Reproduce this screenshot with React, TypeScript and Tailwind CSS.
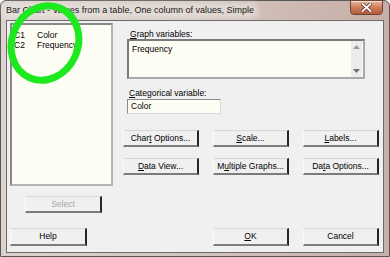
import React from "react";

type BtnProps = {
  children: React.ReactNode;
  className?: string;
  disabled?: boolean;
};

function WinButton({ children, className = "", disabled }: BtnProps) {
  return (
    <div
      className={`flex items-center justify-center bg-[#f0f0f0] border-t border-t-[#d6d6d6] border-l border-l-[#fbfbfb] border-r-2 border-r-[#262626] border-b-2 border-b-[#7c7c7c] text-[8.5px] leading-none ${
        disabled ? "text-[#a6a6a6]" : "text-black"
      } ${className}`}
    >
      <span>{children}</span>
    </div>
  );
}

function CloseButton() {
  return (
    <div className="-mt-[1px] mr-[1px] flex h-[15px] w-[33px] items-center justify-center rounded-b-[4px] border border-[#6a4436] bg-gradient-to-b from-[#e6bba4] via-[#cf7d57] to-[#b45a3b] shadow-[inset_0_1px_0_rgba(255,235,220,0.7)]">
      <svg width="11" height="9" viewBox="0 0 11 9">
        <path
          d="M1.5 1 L9.5 8 M9.5 1 L1.5 8"
          stroke="#5b3326"
          strokeWidth="3.4"
          strokeLinecap="square"
        />
        <path
          d="M1.5 1 L9.5 8 M9.5 1 L1.5 8"
          stroke="#ffffff"
          strokeWidth="1.8"
          strokeLinecap="square"
        />
      </svg>
    </div>
  );
}

function App() {
  return (
    <div className="relative h-[257px] w-[390px] overflow-hidden bg-white font-['Liberation_Sans',Arial,sans-serif]">
      <div className="flex h-full flex-col rounded-t-[6px] border border-[#585656] bg-gradient-to-r from-[#dbd3ce] via-[#d3c5bf] to-[#c7aea6] px-[5px] pb-[3px]">
        {/* title bar */}
        <div className="flex h-[19px] items-center justify-between">
          <span className="-ml-[2px] rounded-full bg-[rgba(236,231,228,0.55)] px-[2px] text-[9px] leading-[11px] text-[#1a1a1a] shadow-[0_0_5px_3px_rgba(236,231,228,0.55)]">
            Bar Chart - Values from a table, One column of values, Simple
          </span>
          <div className="self-start">
            <CloseButton />
          </div>
        </div>

        {/* client area */}
        <div className="flex flex-1 flex-col border border-[#6c6a6a] bg-[#f0f0f0] pl-[3px] pt-[2px] pr-[4px]">
          <div className="flex">
            {/* left column */}
            <div className="flex w-[103px] flex-col">
              <div className="h-[163px] border-2 border-t-[#8a8a8a] border-l-[#8a8a8a] border-r-[#b4b4b4] border-b-[#b4b4b4] bg-[#fdfdf3] pl-[2px] pt-[5px] text-[8.5px] leading-[10px] text-black">
                <div className="flex">
                  <span className="w-[23px]">C1</span>
                  <span>Color</span>
                </div>
                <div className="flex">
                  <span className="w-[23px]">C2</span>
                  <span>Frequency</span>
                </div>
              </div>
              <WinButton disabled className="ml-[15px] mt-[10px] h-[17px] w-[77px]">
                Select
              </WinButton>
            </div>

            {/* right column */}
            <div className="ml-[10px] flex flex-col">
              <div className="ml-[7px] mt-[6px] h-[10px] text-[8.5px] leading-[10px] text-black">
                <u>G</u>raph variables:
              </div>
              <div className="ml-[4px] flex h-[40px] w-[238px] border-2 border-t-[#7a7a7a] border-l-[#7a7a7a] border-r-[#a9a9a9] border-b-[#a9a9a9] bg-[#fdfdf3]">
                <div className="flex-1 pl-[3px] pt-[3px] text-[8.5px] leading-[10px] text-black">
                  Frequency
                </div>
                <div className="mr-[1px] flex w-[11px] flex-col items-center justify-between bg-[#ececea] py-[4px]">
                  <svg width="7" height="4" viewBox="0 0 7 4">
                    <path d="M0 4 L3.5 0 L7 4 Z" fill="#9a9a9a" />
                  </svg>
                  <svg width="7" height="4" viewBox="0 0 7 4">
                    <path d="M0 0 L7 0 L3.5 4 Z" fill="#6e6e6e" />
                  </svg>
                </div>
              </div>
              <div className="ml-[6px] mt-[9px] h-[10px] text-[8.5px] leading-[10px] text-black">
                <u>C</u>ategorical variable:
              </div>
              <div className="ml-[4px] mt-[1px] flex h-[15px] w-[94px] items-center border border-t-[#8c8c8c] border-l-[#8c8c8c] border-r-[#dadada] border-b-[#dadada] bg-[#fdfdf3] pl-[3px] text-[8.5px] leading-none text-black">
                Color
              </div>
              <div className="mt-[16px] grid grid-cols-[76px_76px_76px] gap-x-[14px] gap-y-[11px]">
                <WinButton className="h-[17px]">
                  Char<u>t</u> Options...
                </WinButton>
                <WinButton className="h-[17px]">
                  <u>S</u>cale...
                </WinButton>
                <WinButton className="h-[17px]">
                  <u>L</u>abels...
                </WinButton>
                <WinButton className="h-[17px]">
                  <u>D</u>ata View...
                </WinButton>
                <WinButton className="h-[17px]">
                  M<u>u</u>ltiple Graphs...
                </WinButton>
                <WinButton className="h-[17px]">
                  Da<u>t</u>a Options...
                </WinButton>
              </div>
            </div>
          </div>

          {/* bottom buttons */}
          <div className="mt-[15px] flex">
            <WinButton className="h-[18px] w-[77px]">Help</WinButton>
            <WinButton className="ml-[126px] h-[18px] w-[76px]">
              <u>O</u>K
            </WinButton>
            <WinButton className="ml-[14px] h-[18px] w-[76px]">Cancel</WinButton>
          </div>
        </div>
      </div>

      {/* green highlight circle */}
      <svg
        className="pointer-events-none absolute left-0 top-0"
        width="390"
        height="257"
        viewBox="0 0 390 257"
      >
        <ellipse
          cx="45"
          cy="43"
          rx="33"
          ry="38"
          transform="rotate(24 45 43)"
          fill="none"
          stroke="#1ee81e"
          strokeWidth="7"
        />
      </svg>
    </div>
  );
}

export default App;
